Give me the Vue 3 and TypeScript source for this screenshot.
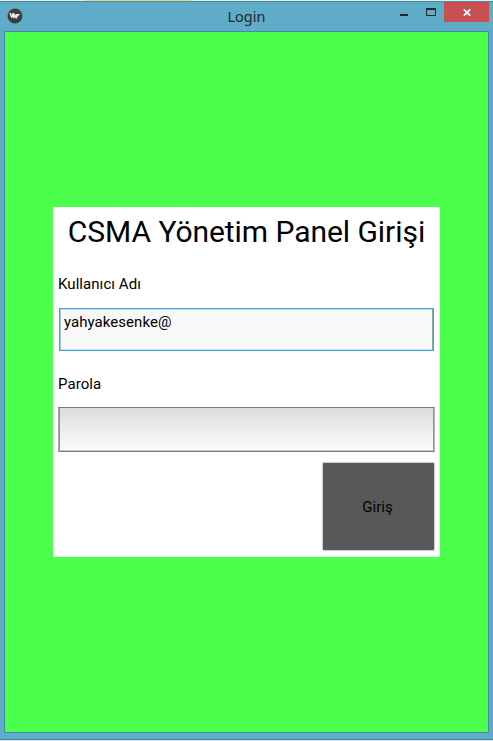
<script setup lang="ts">
import { ref } from 'vue'

const username = ref<string>('yahyakesenke@')
const password = ref<string>('')
</script>

<template>
  <div class="desktop">
    <div class="backdrop"><span class="tab"></span><span class="accent"></span></div>
    <main class="window">
      <header class="titlebar">
        <svg class="logo" width="16" height="16" viewBox="0 0 16 16">
          <circle cx="8" cy="8" r="7.5" fill="#3b3f41" />
          <path d="M2.2 5 3.8 4.8 4.8 7.2 5.4 5 7 5 8.2 7 8.8 6.1 13.6 6 11.3 7.8 9.2 11 7.8 9.2 6.8 10.8 5.4 9 4.4 10.2z" fill="#e8e8e8" />
        </svg>
        <h1 class="caption">Login</h1>
        <div class="controls">
          <button class="control minimize" aria-label="Minimize">
            <svg width="8" height="2"><rect width="8" height="2" fill="#222a2d" /></svg>
          </button>
          <button class="control maximize" aria-label="Maximize">
            <svg width="10" height="8" shape-rendering="crispEdges"><path d="M0 0H10V8H0ZM1 2V7H9V2Z" fill="#222a2d" fill-rule="evenodd" /></svg>
          </button>
          <button class="control close" aria-label="Close">
            <svg width="8" height="7" viewBox="0 0 8 7"><path d="M.8.3 7.2 6.7M7.2.3.8 6.7" stroke="#fff" stroke-width="1.7" /></svg>
          </button>
        </div>
      </header>
      <section class="client">
        <form class="card" @submit.prevent>
          <h2 class="heading">CSMA Yönetim Panel Girişi</h2>
          <label class="label" for="user">Kullanıcı Adı</label>
          <input id="user" v-model="username" class="field active" type="text" spellcheck="false" />
          <label class="label second" for="pass">Parola</label>
          <input id="pass" v-model="password" class="field" type="password" />
          <button class="submit" type="submit">Giriş</button>
        </form>
      </section>
    </main>
  </div>
</template>

<style>
body {
  margin: 0;
  overflow: hidden;
}
</style>

<style scoped>
.desktop {
  display: flex;
  flex-direction: column;
  width: 493px;
  height: 741px;
  background: #dfe5e6;
}
.backdrop {
  display: flex;
  height: 1px;
  background: #e9eae6;
}
.tab {
  width: 86px;
}
.accent {
  width: 105px;
  background: #e3d794;
}
.window {
  box-sizing: border-box;
  display: flex;
  flex-direction: column;
  height: 739px;
  padding: 0 4px 6px;
  border-top: 1px solid #438ba5;
  border-bottom: 1px solid #438ba5;
  background: #5eacc7;
}
.titlebar {
  display: grid;
  grid-template-columns: 103px 1fr 103px;
  height: 29px;
  font-family: "Noto Sans", "Open Sans", sans-serif;
}
.logo {
  margin: 6px 0 0 3px;
}
.caption {
  margin: 4px 0 0;
  color: #222a2d;
  font-size: 14.5px;
  font-weight: 400;
  line-height: 20px;
  text-align: center;
}
.controls {
  display: flex;
  justify-content: flex-end;
}
.control {
  display: flex;
  align-items: center;
  justify-content: center;
  width: 27px;
  height: 20px;
  padding: 0;
  border: 0;
  background: transparent;
}
.minimize {
  padding-top: 6px;
}
.close {
  width: 45px;
  background: #c75050;
}
.client {
  box-sizing: border-box;
  display: flex;
  flex: 1;
  align-items: flex-start;
  justify-content: center;
  padding-top: 175px;
  border: 1px solid #4689a2;
  background: #4dff4d;
}
.card {
  box-sizing: border-box;
  display: flex;
  flex-direction: column;
  width: 387px;
  height: 350px;
  padding: 5px;
  background: #fff;
  color: #000;
  font: 15px/20px Roboto, sans-serif;
}
.card > * {
  flex-shrink: 0;
}
.heading {
  margin: 0 0 22px;
  font-size: 30px;
  font-weight: 400;
  letter-spacing: -0.05px;
  line-height: 40px;
  text-align: center;
  white-space: nowrap;
}
.label {
  height: 20px;
  margin-bottom: 14px;
  letter-spacing: 0.06px;
}
.field {
  box-sizing: border-box;
  width: 377px;
  height: 45px;
  padding: 3px 4px 18px;
  border: 1px solid #7b7b7b;
  border-right-color: #b4b4b4;
  border-left-color: #a6a6a6;
  outline: 0;
  background: linear-gradient(#dcdcdc, #fcfcfc);
  box-shadow: inset 1px 0 #929292, inset -1px 0 #929292, inset 0 -1px #cacaca;
  color: #000;
  font: inherit;
}
.active {
  width: 375px;
  height: 43px;
  margin-left: 1px;
  border-color: #36a8d5;
  background: #f8f8f8;
  box-shadow: inset 1px 0 #a9c8d3, inset -1px 0 #7fa9b9, inset 0 1px #cadce2, inset 0 -1px #cadce2;
  letter-spacing: 0.05px;
}
.second {
  margin-top: 23px;
  margin-bottom: 13px;
}
.submit {
  align-self: flex-end;
  width: 111px;
  height: 87px;
  margin: 11px 1px 0 0;
  padding: 1px 2px 0 0;
  border: 0;
  border-radius: 1px;
  background: #585858;
  box-shadow: 0 0 1px 1px #c9c9c9;
  color: #000;
  font: inherit;
}
</style>
